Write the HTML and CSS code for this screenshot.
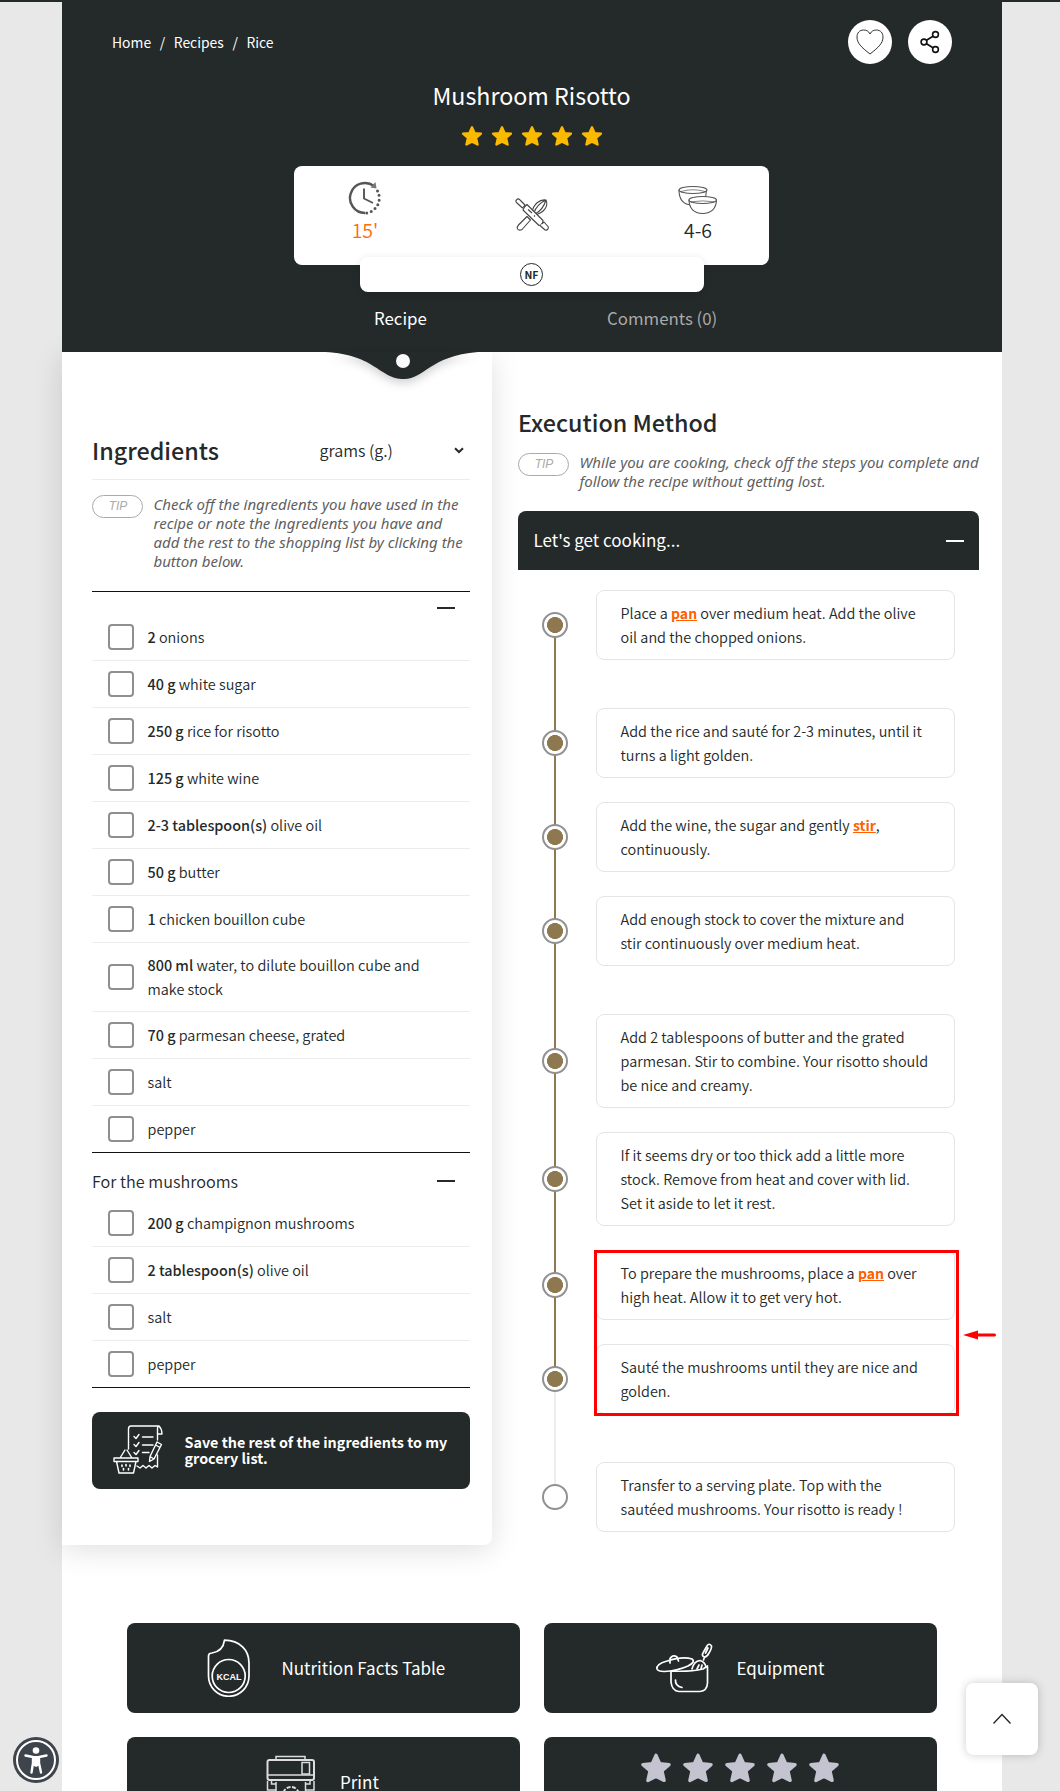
FILE: index.html
```html
<!DOCTYPE html>
<html lang="en">
<head>
<meta charset="utf-8">
<title>Mushroom Risotto</title>
<link rel="stylesheet" href="styles.css">
</head>
<body>
<svg class="defs" width="0" height="0">
  <symbol id="star" viewBox="0 0 24 24"><path d="M12 2.500 14.800 8.800 21.800 9.500 16.500 14.100 18.100 21.300 12 18.300 5.900 21.300 7.500 14.100 2.200 9.500 9.200 8.800Z" fill="currentColor" stroke="currentColor" stroke-width="2.500" stroke-linejoin="round"/></symbol>
</svg>
<div class="topline"></div>
<main class="page">
  <header class="hero">
    <div class="hero-top">
      <nav class="crumbs"><a>Home</a><span>/</span><a>Recipes</a><span>/</span><a>Rice</a></nav>
      <div class="actions">
        <button class="round"><svg width="28" height="26" viewBox="0 0 28 26" fill="none" stroke="#333" stroke-width="1"><path d="M14 5C12.500 2 10.500 1 7.500 1 3.500 1 1 4 1 8 1 14 5 18 14 25 23 18 27 14 27 8 27 4 24.500 1 20.500 1 17.500 1 15.500 2 14 5Z"/></svg></button>
        <button class="round"><svg width="20" height="24" viewBox="0 0 20 24" fill="none" stroke="#111" stroke-width="1.600"><circle cx="4" cy="12" r="2.900"/><circle cx="15.500" cy="4.500" r="2.900"/><circle cx="15.500" cy="19.500" r="2.900"/><path d="M6.500 10.300 13 6.200M6.500 13.700 13 17.800"/></svg></button>
      </div>
    </div>
    <h1>Mushroom Risotto</h1>
    <div class="stars">
      <svg><use href="#star"/></svg><svg><use href="#star"/></svg><svg><use href="#star"/></svg><svg><use href="#star"/></svg><svg><use href="#star"/></svg>
    </div>
    <div class="facts">
      <div class="fact time">
        <svg width="34" height="34" viewBox="0 0 34 34" fill="none" stroke="#555"><path d="M17 32A15 15 0 1 1 26 5" stroke-width="2.400"/><path d="M22.500 6.500 28.500 7.500 27.500 1Z" fill="#777" stroke="none"/><path d="M29.500 10A15 15 0 0 1 18 32" stroke-width="3" stroke-dasharray="0 4.700" stroke-linecap="round"/><path d="M16 7.500V17.500L25 22" stroke-width="1.900"/></svg>
        <span>15'</span>
      </div>
      <div class="fact tools">
        <svg width="34" height="34" viewBox="0 0 34 34" fill="#fff" stroke="#444" stroke-width="1.100" stroke-linejoin="round"><path d="M3.500 27 12 18.500 15.500 22 7 31.500Q4 33 2.500 31 1.500 29 3.500 27Z"/><path d="M17 15C18 6 25 1 31 2 34 9 28 15 20 17ZM18.500 15.500Q22 6 31 2M20 16Q28 12 31 2"/><path d="M9.500 9 12 6.500 28 22.500Q28 27 24 27.500L8 12Z"/><path d="M1.500 2Q3-.2 5 2L10 7 7.500 10 2 5Q0 3.500 1.500 2ZM26.500 26 29 24 33 28.500Q34 30.500 32 32 30.500 32.500 29.500 31.500L25 27.500"/><path d="M13 11.500 17 15M19 17.500 20 18.500" fill="none"/></svg>
      </div>
      <div class="fact portions">
        <svg width="40" height="30" viewBox="0 0 40 30" fill="#fff" stroke="#555" stroke-width="1.100"><path d="M1 5Q1 19 13 20H20Q28 18 28.500 5"/><ellipse cx="15" cy="5" rx="14" ry="3.500"/><path d="M3 6.500Q15 3 27 6.500" fill="none" stroke-width=".7"/><path d="M11 15Q11.500 28 24.500 28.500 38 28 38.500 15"/><ellipse cx="24.700" cy="15" rx="13.800" ry="3.500"/><path d="M13 16.800Q25 15 36 16.800" fill="none" stroke-width=".7"/></svg>
        <span>4-6</span>
      </div>
    </div>
    <div class="badges"><span class="nf">NF</span></div>
    <nav class="tabs"><a class="on">Recipe</a><a>Comments (0)</a></nav>
    <svg class="notch" width="153" height="28" viewBox="0 0 153 28"><path d="M0 0C52 3 54 27 79 27 100 27 104 4 153 0Z" fill="#242929"/><circle cx="78" cy="9" r="7" fill="#fafafa"/></svg>
  </header>

  <div class="columns">
    <section class="ingredients">
      <div class="ing-head">
        <h2>Ingredients</h2>
        <div class="unit"><span>grams (g.)</span><svg width="10" height="7" viewBox="0 0 10 7" fill="none" stroke="#242929" stroke-width="2"><path d="M1 1.200 5 5 9 1.200"/></svg></div>
      </div>
      <div class="tip"><span class="pill">TIP</span><p>Check off the ingredients you have used in the<br>recipe or note the ingredients you have and<br>add the rest to the shopping list by clicking the<br>button below.</p></div>
      <div class="group">
        <div class="group-head short"><span></span><i></i></div>
        <ul>
          <li><b class="box"></b><span><strong>2</strong> onions</span></li>
          <li><b class="box"></b><span><strong>40 g</strong> white sugar</span></li>
          <li><b class="box"></b><span><strong>250 g</strong> rice for risotto</span></li>
          <li><b class="box"></b><span><strong>125 g</strong> white wine</span></li>
          <li><b class="box"></b><span><strong>2-3 tablespoon(s)</strong> olive oil</span></li>
          <li><b class="box"></b><span><strong>50 g</strong> butter</span></li>
          <li><b class="box"></b><span><strong>1</strong> chicken bouillon cube</span></li>
          <li><b class="box"></b><span><strong>800 ml</strong> water, to dilute bouillon cube and<br>make stock</span></li>
          <li><b class="box"></b><span><strong>70 g</strong> parmesan cheese, grated</span></li>
          <li><b class="box"></b><span>salt</span></li>
          <li><b class="box"></b><span>pepper</span></li>
        </ul>
      </div>
      <div class="group last">
        <div class="group-head"><span>For the mushrooms</span><i></i></div>
        <ul>
          <li><b class="box"></b><span><strong>200 g</strong> champignon mushrooms</span></li>
          <li><b class="box"></b><span><strong>2 tablespoon(s)</strong> olive oil</span></li>
          <li><b class="box"></b><span>salt</span></li>
          <li><b class="box"></b><span>pepper</span></li>
        </ul>
      </div>
      <button class="save">
        <svg width="50" height="50" viewBox="0 0 50 50" fill="none" stroke="#fff" stroke-width="1.400" stroke-linejoin="round" stroke-linecap="round"><path d="M15.500 24V4Q15.500 1 18 1H46Q49 4 49 9H44.500V15M44.500 9V4Q44.500 1 46 1M44.500 30V42L42 40.500 39 43 36 40.500 33 43 30 40.500 27 43 24 41"/><path d="M21 11.500 23 13.500 26 9.500M21 19.500 23 21.500 26 17.500M21 27.500 23 29.500 26 25.500M29.500 12H40M29.500 20H40M29.500 27.500H36"/><path d="M44 17 48.500 19.500 41 34 36.500 36.500 37 31.500ZM42.500 20 47 22.500M37 31.500 41 34"/><path d="M1 33H25V36.500H1ZM3.500 36.500 6 48H20.500L23 36.500M7 33 12 25M19 33 14 25"/><path d="M9 40V41.500M13 39.500V41M17 40V41.500M10.500 43.500V45M15.500 43.500V45" stroke-width="1.600"/></svg>
        <span>Save the rest of the ingredients to my<br>grocery list.</span>
      </button>
    </section>

    <section class="method">
      <h2>Execution Method</h2>
      <div class="tip"><span class="pill">TIP</span><p>While you are cooking, check off the steps you complete and<br>follow the recipe without getting lost.</p></div>
      <div class="bar"><span>Let's get cooking...</span><i></i></div>
      <ol class="steps">
        <li class="done far"><b class="dot"></b><p>Place a <a>pan</a> over medium heat. Add the olive<br>oil and the chopped onions.</p></li>
        <li class="done"><b class="dot"></b><p>Add the rice and sauté for 2-3 minutes, until it<br>turns a light golden.</p></li>
        <li class="done"><b class="dot"></b><p>Add the wine, the sugar and gently <a>stir</a>,<br>continuously.</p></li>
        <li class="done far"><b class="dot"></b><p>Add enough stock to cover the mixture and<br>stir continuously over medium heat.</p></li>
        <li class="done"><b class="dot"></b><p>Add 2 tablespoons of butter and the grated<br>parmesan. Stir to combine. Your risotto should<br>be nice and creamy.</p></li>
        <li class="done"><b class="dot"></b><p>If it seems dry or too thick add a little more<br>stock. Remove from heat and cover with lid.<br>Set it aside to let it rest.</p></li>
        <li class="done"><b class="dot"></b><p>To prepare the mushrooms, place a <a>pan</a> over<br>high heat. Allow it to get very hot.</p>
          <div class="mark"><svg width="33" height="10" viewBox="0 0 33 10" fill="red"><path d="M0 5 15 .5V9.500ZM14 3.500H31.500A1.500 1.500 0 0 1 31.500 6.500H14Z"/></svg></div></li>
        <li class="done far current"><b class="dot"></b><p>Sauté the mushrooms until they are nice and<br>golden.</p></li>
        <li class="end"><b class="dot"></b><p>Transfer to a serving plate. Top with the<br>sautéed mushrooms. Your risotto is ready !</p></li>
      </ol>
    </section>
  </div>

  <section class="extras">
    <div class="tile nutrition">
      <svg width="44" height="58" viewBox="0 0 44 58" fill="none" stroke="#fff" stroke-width="1.700"><path d="M17.500 1.200C33 1.500 42 11 42 24V37A20.200 20.200 0 0 1 1.500 37V17Q1.500 14 5 14 16 12.500 17.500 1.200Z" stroke-linejoin="round"/><circle cx="21.700" cy="37" r="16.500"/><text x="21.900" y="41" text-anchor="middle" class="kcal">KCAL</text></svg>
      <span>Nutrition Facts Table</span>
    </div>
    <div class="tile equipment">
      <svg width="58" height="50" viewBox="0 0 58 50" fill="none" stroke="#fff" stroke-width="1.700" stroke-linejoin="round" stroke-linecap="round"><path d="M16 28V39Q17 48 24 48.500H45Q52 48 52.500 40V23M16 28Q35 29 48 26L52.500 23"/><path d="M2 26Q1 21 12 18 28 13 37 16 41 19 33 23 22 28 9 28.500 3 28.500 2 26ZM15 20V15.500Q18 11 22 14L23.500 18"/><path d="M37 26Q39 18 45 17.500 50 19 51 24M42 26 44 22M46 26 47 22M48.500 17 49.500 14Q46 13 48.500 9L52 3Q54-.5 56.500 3 57 5 54 10 52 14 49.500 14M50.500 10 53 5"/><path d="M20.500 37Q20 43 27 44.500"/></svg>
      <span>Equipment</span>
    </div>
    <div class="tile print">
      <svg width="50" height="50" viewBox="0 0 50 50" fill="none" stroke="#ddd" stroke-width="1.500"><path d="M10 5V1.500H39V5"/><rect x="1.500" y="5" width="46.500" height="20" rx="2" stroke-width="2"/><path d="M1.500 20H48M1.500 26V35H10V29H5.500V25H44V29H39.500V35H48V26M10 27V50M39.500 27V50"/><rect x="36" y="7.500" width="7.500" height="11.500"/><circle cx="25" cy="40" r="8" stroke-dasharray="4 1.500" stroke-width="2"/></svg>
      <span>Print</span>
    </div>
    <div class="tile rate">
      <svg><use href="#star"/></svg><svg><use href="#star"/></svg><svg><use href="#star"/></svg><svg><use href="#star"/></svg><svg><use href="#star"/></svg>
    </div>
  </section>
</main>
<button class="to-top"><svg width="20" height="12" viewBox="0 0 20 12" fill="none" stroke="#222" stroke-width="1.300"><path d="M1.500 10.500 10 1.500 18.500 10.500"/></svg></button>
<button class="access"><svg width="46" height="46" viewBox="0 0 46 46"><circle cx="23" cy="23" r="23" fill="#3d444b"/><circle cx="23" cy="23" r="19" fill="none" stroke="#fff" stroke-width="2"/><circle cx="23" cy="13.500" r="3.300" fill="#fff"/><path d="M12.500 18.500 20 20V26L18.500 35.500M33.500 18.500 26 20V26L28 35.500" fill="none" stroke="#fff" stroke-width="2.400" stroke-linecap="round"/><path d="M19 19H27V28L23 30 19 28Z" fill="#fff"/></svg></button>
</body>
</html>
```
FILE: styles.css
```css
* { box-sizing: border-box; margin: 0; padding: 0; }
body {
  height: 1791px; overflow: hidden; background: #e8e8e8; color: #242929;
  font-family: "Noto Sans CJK SC", "Noto Sans", sans-serif;
  font-size: 14.45px; font-weight: 350; white-space: nowrap;
}
ul, ol { list-style: none; }
button { border: 0; font: inherit; background: none; }
svg { display: block; flex: none; }
.defs { position: absolute; }
.topline { height: 2px; background: #242929; }
.page { width: 940px; height: 1789px; margin-left: 62px; background: #fff; }

.hero {
  position: relative; z-index: 2; height: 350px; background: #242929; color: #fff;
  display: flex; flex-direction: column; align-items: center;
}
.hero-top { width: 100%; height: 80px; padding: 0 50px; display: flex; justify-content: space-between; align-items: center; }
.crumbs { display: flex; gap: 8.6px; font-size: 13.9px; font-weight: 400; }
.actions { display: flex; gap: 16px; }
.round { width: 44px; height: 44px; border-radius: 50%; background: #fff; display: grid; place-items: center; }
h1 { font-size: 23.25px; font-weight: 400; line-height: 34px; margin: -4px 1px 0 0; }
.stars { display: flex; gap: 8px; margin: 13px 0 18px; color: #fbb900; }
.stars svg { width: 22px; height: 22px; }
.facts {
  width: 475px; height: 99px; margin: 1px 1px 0 0; border-radius: 8px; background: #fff; color: #242929;
  display: grid; grid-template-columns: 142px 1fr 142px; flex: none;
}
.fact { display: flex; flex-direction: column; align-items: center; padding-top: 15px; font-size: 19.5px; line-height: 24px; }
.fact span { margin-top: 3px; }
.time span { color: #ff6a0d; }
.tools { padding-top: 32px; }
.portions { padding-top: 19px; }
.badges {
  width: 344px; height: 35px; margin-top: -8px; border-radius: 8px; background: #fff; flex: none;
  display: grid; place-items: center; box-shadow: 0 2px 8px rgba(0,0,0,.12);
}
.nf {
  width: 23px; height: 23px; margin-right: 1px; border: 1px solid #242929; border-radius: 50%; color: #242929;
  font-size: 10.5px; font-weight: 700; line-height: 21px; text-align: center;
}
.tabs { display: flex; width: 100%; padding-left: 312px; margin-top: 15px; font-size: 16.85px; line-height: 22px; font-weight: 400; }
.tabs a { width: 233px; color: #aaa; }
.tabs .on { color: #fff; }
.notch { position: absolute; left: 263px; top: 350px; filter: drop-shadow(0 4px 5px rgba(0,0,0,.18)); }

.columns { display: flex; height: 1193px; }
.ingredients {
  width: 430px; padding: 69px 22px 0 30px; border-radius: 0 0 8px 0; background: #fff; flex: none;
  box-shadow: 0 5px 30px rgba(0,0,0,.13);
}
h2 { font-size: 23.3px; font-weight: 500; }
.ing-head { display: flex; justify-content: space-between; align-items: center; height: 59px; border-bottom: 1px solid #ededed; }
.unit { display: flex; align-items: center; justify-content: space-between; width: 150.500px; padding-right: 6px; font-size: 16.1px; }
.tip { display: flex; gap: 10.500px; color: #606060; }
.tip p { font: italic 15px/19px "Noto Sans", sans-serif; }
.pill {
  width: 51px; height: 23px; border: 1px solid #aaa; border-radius: 12px; color: #aaa; flex: none;
  font: italic 12px/21px "Liberation Sans", sans-serif; text-align: center; padding-left: 1px;
}
.ingredients .tip { padding: 15px 0 20px; }
.group { border-top: 1px solid #111; }
.group.last { border-bottom: 1px solid #111; }
.group-head { display: flex; justify-content: space-between; height: 47px; padding: 16px 15px 0 0; font-size: 16.2px; line-height: 25px; }
.group-head i { width: 18px; height: 2px; margin-top: 11px; background: #242929; }
.group-head.short { height: 22px; padding-top: 15px; }
.group-head.short i { margin-top: 0; }
.group li { display: flex; align-items: center; gap: 13.500px; padding: 10px 16px; border-bottom: 1px solid #ededed; line-height: 24px; }
.group li:last-child { border-bottom: 0; }
.group strong { font-size: 14.4px; font-weight: 500; }
.box { width: 26px; height: 26px; border: 2px solid #8f8f8f; border-radius: 4px; flex: none; }
.save {
  display: flex; align-items: center; gap: 21.500px; width: 378px; height: 77px; margin-top: 24px; padding: 0 21px 2px;
  border-radius: 8px; background: #242929; color: #fff; font-size: 14.35px; font-weight: 700; line-height: 16px; text-align: left;
}

.method { width: 461px; margin-left: 26px; padding-top: 50px; }
.method h2 { line-height: 40px; margin-bottom: 11px; }
.bar {
  display: flex; justify-content: space-between; align-items: center; width: 461px; height: 59px; margin-top: 20px;
  padding: 0 15px 0 15.500px; border-radius: 8px 8px 0 0; background: #242929; color: #fff; font-size: 17px; font-weight: 400;
}
.bar span { margin-bottom: 2px; }
.bar i { width: 18px; height: 2px; background: #fff; }
.steps { margin: 20px 24px 0; }
.steps li { position: relative; display: flex; align-items: center; gap: 28px; margin-bottom: 24px; }
.steps li.far { margin-bottom: 48px; }
.steps p { width: 359px; padding: 10px 23.500px; border: 1px solid #e5e5e5; border-radius: 8px; line-height: 24px; }
.steps a { color: #ff6000; font-weight: 700; font-size: 14px; text-decoration: underline; }
.dot { position: relative; z-index: 1; width: 26px; height: 26px; border: 2px solid #919191; border-radius: 50%; background: #fff; }
.done .dot { background: radial-gradient(circle, #8d7850 7.7px, #fff 8.3px); }
.steps li::before { content: ""; position: absolute; left: 12px; top: 50%; width: 2px; height: calc(100% + 24px); background: #8d7850; }
.steps li.far::before { height: calc(100% + 48px); }
.steps li.current::before { background: #eee; }
.steps li.end::before { display: none; }
/* Annotation drawn over steps seven and eight */
.mark { position: absolute; z-index: 2; left: 52px; top: 0; width: 365px; height: 166px; border: 3px solid red; }
.mark svg { position: absolute; left: 366px; top: 77px; }

.extras { display: grid; grid-template-columns: 393px 393px; gap: 24px; height: 246px; padding: 78px 65px 0; overflow: hidden; grid-auto-rows: 90px; }
.tile { display: flex; align-items: center; border-radius: 8px; background: #242929; color: #fff; font-size: 17px; font-weight: 400; }
.tile span { margin-bottom: 2px; }
.kcal { font: 700 9px "Liberation Sans", sans-serif; fill: #fff; stroke: none; }
.nutrition { padding-left: 80px; gap: 30.500px; }
.equipment { padding-left: 111px; gap: 23.500px; }
.print { padding-left: 139px; gap: 24px; }
.print svg { margin-top: -4px; }
.rate { padding: 15px 0 0 96px; gap: 10px; align-items: flex-start; color: #c3c4d0; }
.rate svg { width: 32px; height: 32px; }

.to-top {
  position: fixed; left: 966px; top: 1683px; width: 72px; height: 72px; border-radius: 8px; background: #fff;
  display: grid; place-items: center; box-shadow: 0 0 10px rgba(0,0,0,.2);
}
.access { position: fixed; left: 13px; top: 1737px; }
```
